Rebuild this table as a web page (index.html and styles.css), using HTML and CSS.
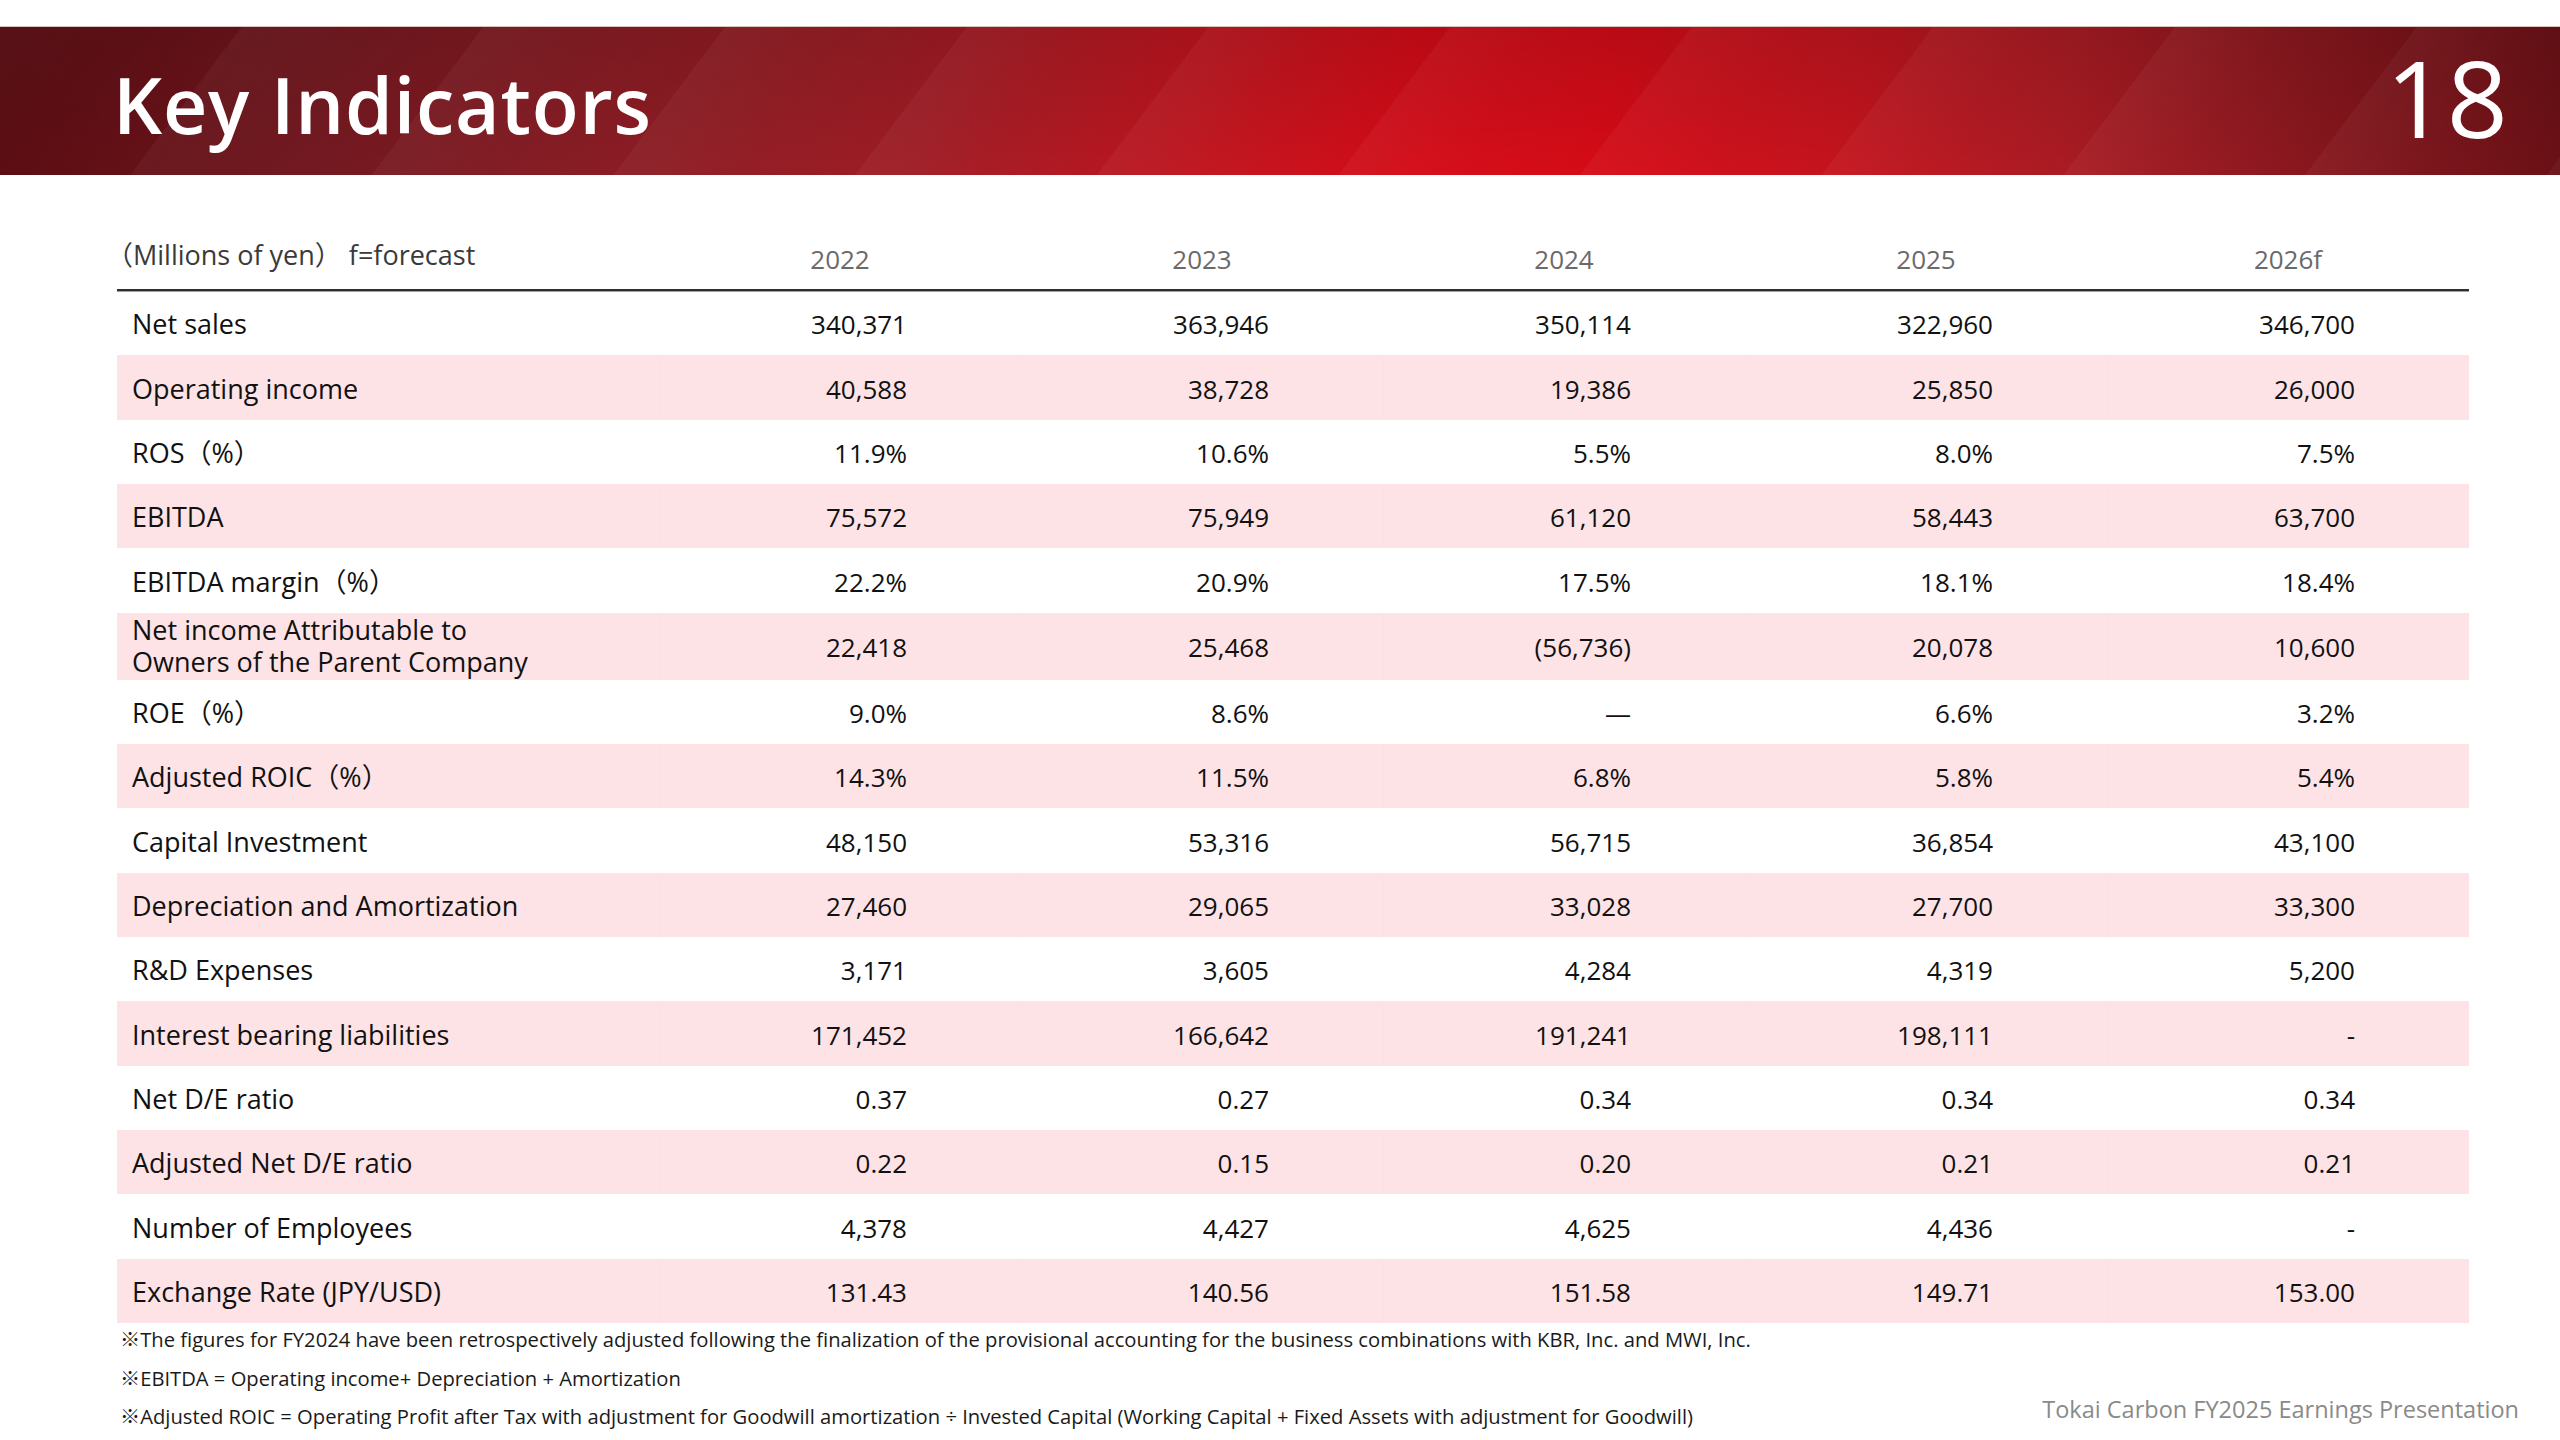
FILE: index.html
```html
<!DOCTYPE html>
<html lang="en">
<head>
<meta charset="utf-8">
<title>Key Indicators</title>
<link rel="stylesheet" href="styles.css">
</head>
<body>
<div class="slide">
  <header class="banner">
    <h1 class="title">Key Indicators</h1>
    <div class="page-no">18</div>
  </header>

  <main class="content">
    <div class="table">
      <div class="thead">
        <div class="th-label">（Millions of yen）&nbsp;f=forecast</div>
        <div class="th-year">2022</div>
        <div class="th-year">2023</div>
        <div class="th-year">2024</div>
        <div class="th-year">2025</div>
        <div class="th-year">2026f</div>
      </div>

      <div class="row">
        <div class="label">Net sales</div>
        <div class="num">340,371</div><div class="num">363,946</div><div class="num">350,114</div><div class="num">322,960</div><div class="num">346,700</div>
      </div>
      <div class="row pink">
        <div class="label">Operating income</div>
        <div class="num">40,588</div><div class="num">38,728</div><div class="num">19,386</div><div class="num">25,850</div><div class="num">26,000</div>
      </div>
      <div class="row">
        <div class="label">ROS（%）</div>
        <div class="num">11.9%</div><div class="num">10.6%</div><div class="num">5.5%</div><div class="num">8.0%</div><div class="num">7.5%</div>
      </div>
      <div class="row pink">
        <div class="label">EBITDA</div>
        <div class="num">75,572</div><div class="num">75,949</div><div class="num">61,120</div><div class="num">58,443</div><div class="num">63,700</div>
      </div>
      <div class="row">
        <div class="label">EBITDA margin（%）</div>
        <div class="num">22.2%</div><div class="num">20.9%</div><div class="num">17.5%</div><div class="num">18.1%</div><div class="num">18.4%</div>
      </div>
      <div class="row pink tall">
        <div class="label two-line"><span class="ln">Net income Attributable to</span><span class="ln">Owners of the Parent Company</span></div>
        <div class="num">22,418</div><div class="num">25,468</div><div class="num">(56,736)</div><div class="num">20,078</div><div class="num">10,600</div>
      </div>
      <div class="row">
        <div class="label">ROE（%）</div>
        <div class="num">9.0%</div><div class="num">8.6%</div><div class="num dash">—</div><div class="num">6.6%</div><div class="num">3.2%</div>
      </div>
      <div class="row pink">
        <div class="label">Adjusted ROIC（%）</div>
        <div class="num">14.3%</div><div class="num">11.5%</div><div class="num">6.8%</div><div class="num">5.8%</div><div class="num">5.4%</div>
      </div>
      <div class="row">
        <div class="label">Capital Investment</div>
        <div class="num">48,150</div><div class="num">53,316</div><div class="num">56,715</div><div class="num">36,854</div><div class="num">43,100</div>
      </div>
      <div class="row pink">
        <div class="label">Depreciation and Amortization</div>
        <div class="num">27,460</div><div class="num">29,065</div><div class="num">33,028</div><div class="num">27,700</div><div class="num">33,300</div>
      </div>
      <div class="row">
        <div class="label">R&amp;D Expenses</div>
        <div class="num">3,171</div><div class="num">3,605</div><div class="num">4,284</div><div class="num">4,319</div><div class="num">5,200</div>
      </div>
      <div class="row pink">
        <div class="label">Interest bearing liabilities</div>
        <div class="num">171,452</div><div class="num">166,642</div><div class="num">191,241</div><div class="num">198,111</div><div class="num">-</div>
      </div>
      <div class="row">
        <div class="label">Net D/E ratio</div>
        <div class="num">0.37</div><div class="num">0.27</div><div class="num">0.34</div><div class="num">0.34</div><div class="num">0.34</div>
      </div>
      <div class="row pink">
        <div class="label">Adjusted Net D/E ratio</div>
        <div class="num">0.22</div><div class="num">0.15</div><div class="num">0.20</div><div class="num">0.21</div><div class="num">0.21</div>
      </div>
      <div class="row">
        <div class="label">Number of Employees</div>
        <div class="num">4,378</div><div class="num">4,427</div><div class="num">4,625</div><div class="num">4,436</div><div class="num">-</div>
      </div>
      <div class="row pink">
        <div class="label">Exchange Rate (JPY/USD)</div>
        <div class="num">131.43</div><div class="num">140.56</div><div class="num">151.58</div><div class="num">149.71</div><div class="num">153.00</div>
      </div>
    </div>

    <div class="bottom">
      <div class="notes">
        <p>※The figures for FY2024 have been retrospectively adjusted following the finalization of the provisional accounting for the business combinations with KBR, Inc. and MWI, Inc.</p>
        <p>※EBITDA = Operating income+ Depreciation + Amortization</p>
        <p>※Adjusted ROIC = Operating Profit after Tax with adjustment for Goodwill amortization ÷ Invested Capital (Working Capital + Fixed Assets with adjustment for Goodwill)</p>
      </div>
      <div class="footer">Tokai Carbon FY2025 Earnings Presentation</div>
    </div>
  </main>
</div>
</body>
</html>
```

FILE: styles.css
```css
* { box-sizing: border-box; }

html, body {
  margin: 0;
  padding: 0;
  background: #ffffff;
}

body {
  font-family: "Open Sans", "Noto Sans CJK JP", "Noto Sans", sans-serif;
  color: #111111;
}

.slide {
  width: 2560px;
  height: 1440px;
  overflow: hidden;
  background: #ffffff;
  display: flex;
  flex-direction: column;
}

/* ---------- banner ---------- */
.banner {
  margin-top: 26px;
  height: 149px;
  flex: none;
  display: flex;
  justify-content: space-between;
  align-items: flex-start;
  padding: 0 52px 0 113px;
  border-top: 1px solid #d8c4bd;
  background:
    repeating-linear-gradient(127deg,
      rgba(255,255,255,0.04) 0px,
      rgba(255,255,255,0.012) 90px,
      rgba(255,255,255,0) 193px),
    linear-gradient(to bottom, rgba(30,0,0,0.16) 0%, rgba(30,0,0,0) 100%),
    linear-gradient(90deg,
      #5a0a10 0%,
      #731820 12%,
      #8b1c24 24%,
      #a11c25 36%,
      #c2151f 47%,
      #d50c18 55%,
      #d60b17 63%,
      #c5141e 72%,
      #aa1b23 81%,
      #86161d 91%,
      #6b1016 100%);
}

.title {
  margin: 39px 0 0 0;
  font-size: 77px;
  line-height: 1;
  font-weight: 600;
  color: #ffffff;
  letter-spacing: 0.8px;
}

.page-no {
  margin-top: 16px;
  font-size: 107px;
  line-height: 1;
  font-weight: 500;
  color: #ffffff;
}

/* ---------- table ---------- */
.content {
  flex: 1;
  padding: 0 91px 0 117px;
  display: flex;
  flex-direction: column;
}

.table {
  width: 2352px;
}

.thead,
.row {
  display: grid;
  grid-template-columns: 542px repeat(5, 362px);
}

.thead {
  height: 116px;
  border-bottom: 2px solid #2e2e2e;
  box-shadow: 0 1px 0 #a0a0a0;
  align-items: end;
}

.th-label {
  font-size: 27px;
  line-height: 36px;
  color: #3a3a3a;
  padding-bottom: 16px;
  margin-left: -11px;
  white-space: nowrap;
}

.th-year {
  font-size: 26px;
  line-height: 36px;
  color: #6a6a6a;
  text-align: center;
  padding-bottom: 12px;
}

.row {
  height: 64.35px;
  align-items: center;
  font-size: 26px;
  line-height: 36px;
}

.row.tall {
  height: 67px;
}

.row.pink {
  background: #fde3e6;
}

.row.pink .num {
  border-left: 1px solid #fce0e3;
}

.label {
  font-size: 27px;
  padding: 2px 0 0 15px;
  white-space: nowrap;
  align-self: center;
}

.label.two-line {
  display: flex;
  flex-direction: column;
  line-height: 32px;
  padding-top: 0;
  margin-top: -1px;
}

.num {
  text-align: right;
  padding: 2px 114px 0 0;
  align-self: stretch;
  display: flex;
  align-items: center;
  justify-content: flex-end;
}

/* ---------- notes & footer ---------- */
.bottom {
  display: flex;
  justify-content: space-between;
  align-items: flex-end;
  width: 2402px;
  margin-top: -3px;
}

.notes {
  padding-left: 3px;
}

.notes p {
  margin: 0;
  font-size: 20.2px;
  line-height: 38.5px;
  color: #1a1a1a;
  white-space: nowrap;
}

.footer {
  font-size: 23.5px;
  line-height: 30px;
  color: #8a8a8a;
  padding-bottom: 12px;
}
```
